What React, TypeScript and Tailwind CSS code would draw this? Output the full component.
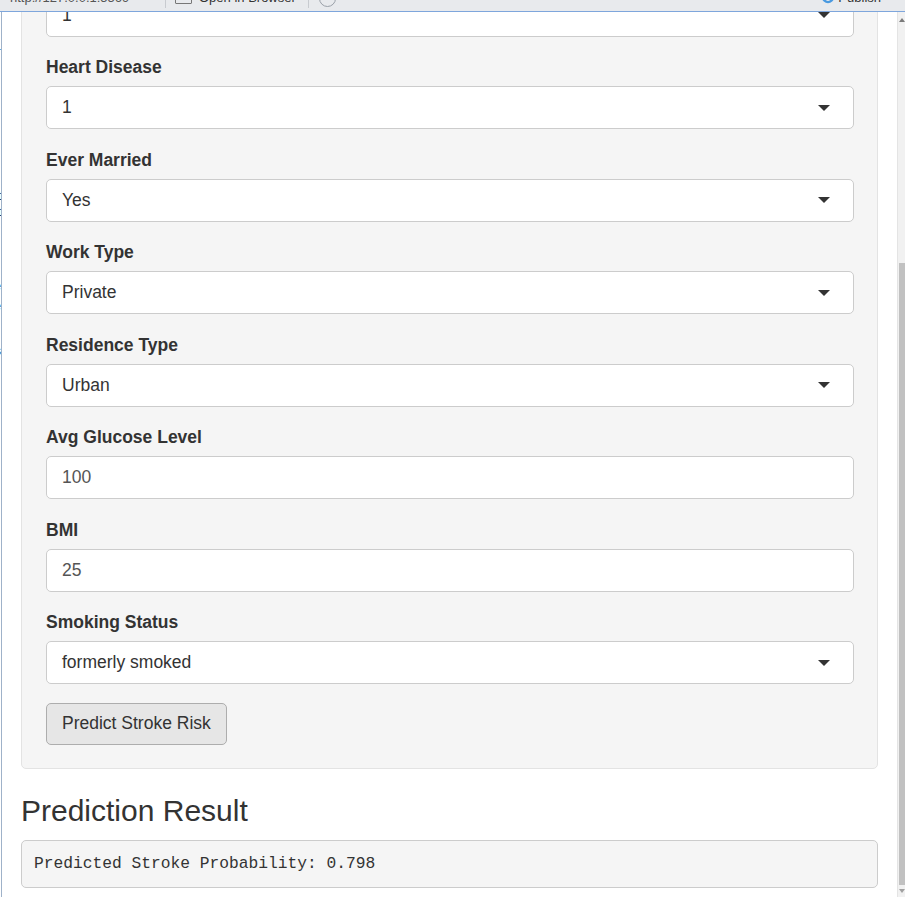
import React from 'react';

const fields = [
  { label: 'Hypertension', value: '1', kind: 'select' },
  { label: 'Heart Disease', value: '1', kind: 'select' },
  { label: 'Ever Married', value: 'Yes', kind: 'select' },
  { label: 'Work Type', value: 'Private', kind: 'select' },
  { label: 'Residence Type', value: 'Urban', kind: 'select' },
  { label: 'Avg Glucose Level', value: '100', kind: 'number' },
  { label: 'BMI', value: '25', kind: 'number' },
  { label: 'Smoking Status', value: 'formerly smoked', kind: 'select' },
];

const Caret = () => (
  <svg width="12" height="6" viewBox="0 0 12 6" className="shrink-0">
    <polygon points="0,0 12,0 6,6" fill="#333333" />
  </svg>
);

const FormGroup = ({ label, value, kind }: { label: string; value: string; kind: string }) => (
  <div className="mb-[18.5px]">
    <div className="text-[17.5px] leading-[25px] font-bold text-[#333] mb-[6px]">{label}</div>
    <div className="h-[43px] bg-white border border-[#cccccc] rounded-[5px] flex items-center pl-[15px] pr-[23px]">
      <span className={`flex-1 text-[17.5px] ${kind === 'number' ? 'text-[#555]' : 'text-[#333]'}`}>{value}</span>
      {kind === 'select' && <Caret />}
    </div>
  </div>
);

const Toolbar = () => (
  <div className="h-[12px] shrink-0 bg-[#e8eaed] border-b border-[#7ea6dc] overflow-hidden">
    <div className="h-[26px] -mt-[15px] flex items-center text-[13px] text-[#333]">
      <span className="ml-[10px] w-[150px] text-[#555]">http://127.0.0.1:5569</span>
      <span className="w-px h-[20px] bg-[#c8cbd0] mx-[5px]" />
      <span className="ml-[4px] w-[17px] h-[12px] border border-[#777] rounded-[1px]" />
      <span className="ml-[7px]">Open in Browser</span>
      <span className="w-px h-[20px] bg-[#c8cbd0] ml-[12px]" />
      <span className="ml-[10px] w-[17px] h-[17px] rounded-full border border-[#9aa0a8]" />
      <span className="flex-1" />
      <svg width="12" height="14" viewBox="0 0 12 14" className="mr-[4px]">
        <path d="M2 3 A5 5 0 1 0 10 3" fill="none" stroke="#4a9ae0" strokeWidth="2.5" />
      </svg>
      <span className="mr-[24px]">Publish</span>
    </div>
  </div>
);

const LeftEdge = () => {
  const frags = [
    { top: 26, t: '1' },
    { top: 176, t: 'nt' },
    { top: 192, t: 'nt' },
    { top: 266, t: 'se' },
    { top: 286, t: 'se' },
    { top: 331, t: 'is' },
  ];
  return (
    <div className="w-[2px] shrink-0 flex">
      <div className="w-px overflow-hidden bg-white flex flex-col">
        {frags.map((f, i) => (
          <div
            key={i}
            className="flex justify-end text-[13px] leading-[16px] text-[#222] whitespace-nowrap"
            style={{ marginTop: i === 0 ? f.top : f.top - frags[i - 1].top - 16 }}
          >
            {f.t}
          </div>
        ))}
      </div>
      <div className="w-px bg-[#9fb2c9]" />
    </div>
  );
};

const Scrollbar = () => (
  <div className="w-[8px] shrink-0 bg-[#f1f1f1] border-l border-[#e4e4e4] flex flex-col items-end">
    <div className="h-[14px] w-full flex items-center justify-center pt-[2px]">
      <svg width="6" height="4" viewBox="0 0 6 4">
        <polygon points="0,4 6,4 3,0" fill="#7a7a7a" />
      </svg>
    </div>
    <div className="h-[237px]" />
    <div className="w-[6px] h-[622px] bg-[#c1c1c1]" />
    <div className="flex-1 w-full flex items-center justify-center">
      <svg width="6" height="4" viewBox="0 0 6 4">
        <polygon points="0,0 6,0 3,4" fill="#a0a0a0" />
      </svg>
    </div>
  </div>
);

export default function App() {
  return (
    <div
      className="w-[905px] h-[897px] bg-white flex flex-col overflow-hidden"
      style={{ fontFamily: '"Liberation Sans", Arial, sans-serif' }}
    >
      <Toolbar />
      <div className="flex flex-1 min-h-0">
        <LeftEdge />
        <div className="flex-1 overflow-hidden pl-[19px] pr-[19px]">
          <div className="-mt-[74.5px] bg-[#f5f5f5] border border-[#e3e3e3] rounded-[5px] pt-[24px] pb-[23px] pl-[24px] pr-[23px]">
            {fields.map((f) => (
              <FormGroup key={f.label} {...f} />
            ))}
            <button className="h-[42px] px-[15px] bg-[#e6e6e6] border border-[#adadad] rounded-[5px] text-[17.5px] text-[#333]">
              Predict Stroke Risk
            </button>
          </div>
          <h3 className="mt-[25px] mb-[13px] text-[30px] leading-[33px] font-medium text-[#333]">Prediction Result</h3>
          <pre
            className="bg-[#f5f5f5] border border-[#cccccc] rounded-[5px] px-[12px] py-[11.5px] text-[16.25px] leading-[23px] text-[#333]"
            style={{ fontFamily: '"Liberation Mono", "Courier New", monospace' }}
          >
            Predicted Stroke Probability: 0.798
          </pre>
        </div>
        <Scrollbar />
      </div>
    </div>
  );
}
